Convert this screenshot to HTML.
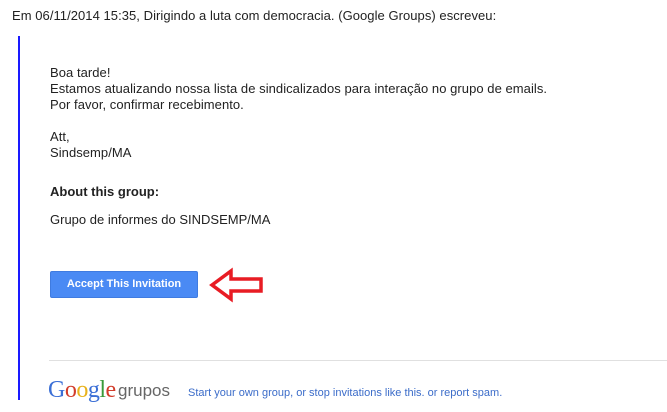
<!DOCTYPE html>
<html><head><meta charset="utf-8"><style>
body{margin:0;width:667px;height:412px;overflow:hidden;background:#fff;font-family:"Liberation Sans",Arial,sans-serif;font-size:13px;color:#222;position:relative}
.a{position:absolute;white-space:nowrap}
.bar{position:absolute;left:18px;top:36px;width:2px;height:364px;background:#1a1aff}
.btn{position:absolute;left:50px;top:271px;width:148px;height:27px;background:#4a8af4;border:1px solid #3f7be0;border-radius:2px;box-sizing:border-box;color:#fff;font-weight:bold;font-size:11px;text-align:center;line-height:25px}
.hr{position:absolute;left:49px;top:360px;width:618px;height:1px;background:#e0e0e0}
.f{font-size:11px;color:#3b6cc9}
.g{font-family:"Liberation Serif",serif;font-size:24px;letter-spacing:-0.5px}
</style></head><body>
<div class="a" style="left:12px;top:8px;letter-spacing:0.05px">Em 06/11/2014 15:35, Dirigindo a luta com democracia. (Google Groups) escreveu:</div>
<div class="bar"></div>
<div class="a" style="left:50px;top:65px;line-height:16px;letter-spacing:0.05px">Boa tarde!<br>Estamos atualizando nossa lista de sindicalizados para interação no grupo de emails.<br>Por favor, confirmar recebimento.<br><br>Att,<br>Sindsemp/MA</div>
<div class="a" style="left:50px;top:184px;font-weight:bold">About this group:</div>
<div class="a" style="left:50px;top:212px">Grupo de informes do SINDSEMP/MA</div>
<div class="btn">Accept This Invitation</div>
<svg class="a" style="left:208px;top:267px" width="58" height="36"><path d="M4 18 L23 4 L23 12 L53 12 L53 24 L23 24 L23 32 Z" fill="none" stroke="#e81c24" stroke-width="3.5" stroke-linejoin="miter"/></svg>
<div class="hr"></div>
<div class="a g" style="left:48px;top:377px"><span style="color:#3b6fd6">G</span><span style="color:#d23c2a">o</span><span style="color:#e8b21c">o</span><span style="color:#3b6fd6">g</span><span style="color:#3a9a3a">l</span><span style="color:#d23c2a">e</span></div>
<div class="a" style="left:118px;top:381px;font-size:17px;color:#666">grupos</div>
<div class="a f" style="left:188px;top:387px">Start your own group, or stop invitations like this. or report spam.</div>
</body></html>
